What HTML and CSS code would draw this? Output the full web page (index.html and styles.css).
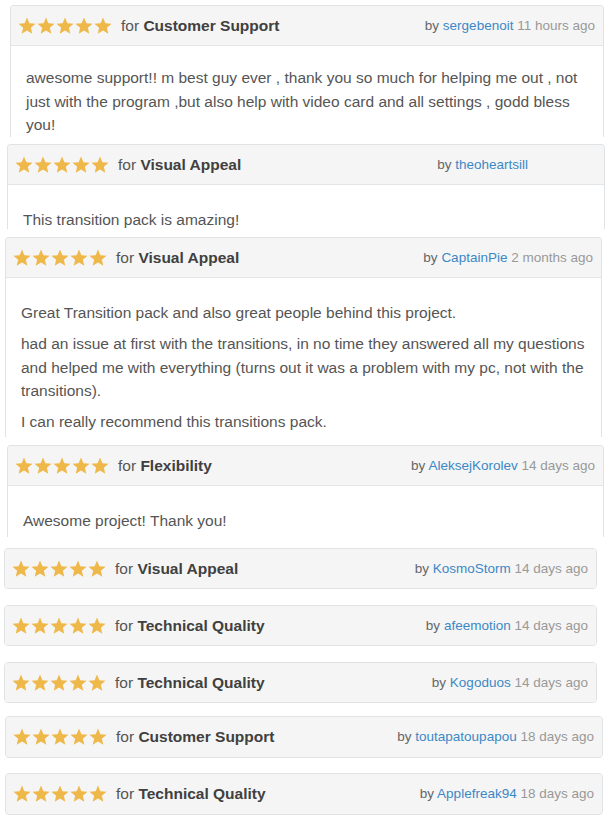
FILE: index.html
```html
<!DOCTYPE html>
<html lang="en">
<head>
<meta charset="utf-8">
<title>Reviews</title>
<link rel="stylesheet" href="styles.css">
</head>
<body>
<svg class="defs" width="0" height="0" aria-hidden="true">
  <defs>
    <symbol id="star" viewBox="0 0 20 20">
      <polygon points="10,0.5 12.65,6.86 19.51,7.41 14.28,11.89 15.88,18.59 10,15 4.12,18.59 5.72,11.89 0.49,7.41 7.35,6.86"/>
    </symbol>
    <symbol id="stars5" viewBox="0 0 94 18">
      <use href="#star" x="0" y="0" width="18" height="18"/>
      <use href="#star" x="19" y="0" width="18" height="18"/>
      <use href="#star" x="38" y="0" width="18" height="18"/>
      <use href="#star" x="57" y="0" width="18" height="18"/>
      <use href="#star" x="76" y="0" width="18" height="18"/>
    </symbol>
  </defs>
</svg>

<main class="reviews">
  <article class="review cut r1">
    <header class="review-head">
      <svg class="stars" aria-label="5 stars"><use href="#stars5"/></svg>
      <span class="cat">for <b>Customer Support</b></span>
      <span class="meta">by <a href="#">sergebenoit</a> <span class="date">11 hours ago</span></span>
    </header>
    <div class="review-body">
      <p>awesome support!! m best guy ever , thank you so much for helping me out , not just with the program ,but also help with video card and all settings , godd bless you!</p>
    </div>
  </article>

  <article class="review cut r2">
    <header class="review-head">
      <svg class="stars" aria-label="5 stars"><use href="#stars5"/></svg>
      <span class="cat">for <b>Visual Appeal</b></span>
      <span class="meta meta-hidden-date">by <a href="#">theoheartsill</a></span>
    </header>
    <div class="review-body">
      <p>This transition pack is amazing!</p>
    </div>
  </article>

  <article class="review cut r3">
    <header class="review-head">
      <svg class="stars" aria-label="5 stars"><use href="#stars5"/></svg>
      <span class="cat">for <b>Visual Appeal</b></span>
      <span class="meta">by <a href="#">CaptainPie</a> <span class="date">2 months ago</span></span>
    </header>
    <div class="review-body">
      <p>Great Transition pack and also great people behind this project.</p>
      <p>had an issue at first with the transitions, in no time they answered all my questions and helped me with everything (turns out it was a problem with my pc, not with the transitions).</p>
      <p>I can really recommend this transitions pack.</p>
    </div>
  </article>

  <article class="review cut r4">
    <header class="review-head">
      <svg class="stars" aria-label="5 stars"><use href="#stars5"/></svg>
      <span class="cat">for <b>Flexibility</b></span>
      <span class="meta">by <a href="#">AleksejKorolev</a> <span class="date">14 days ago</span></span>
    </header>
    <div class="review-body">
      <p>Awesome project! Thank you!</p>
    </div>
  </article>

  <article class="review closed r5">
    <header class="review-head">
      <svg class="stars" aria-label="5 stars"><use href="#stars5"/></svg>
      <span class="cat">for <b>Visual Appeal</b></span>
      <span class="meta">by <a href="#">KosmoStorm</a> <span class="date">14 days ago</span></span>
    </header>
  </article>

  <article class="review closed r6">
    <header class="review-head">
      <svg class="stars" aria-label="5 stars"><use href="#stars5"/></svg>
      <span class="cat">for <b>Technical Quality</b></span>
      <span class="meta">by <a href="#">afeemotion</a> <span class="date">14 days ago</span></span>
    </header>
  </article>

  <article class="review closed r7">
    <header class="review-head">
      <svg class="stars" aria-label="5 stars"><use href="#stars5"/></svg>
      <span class="cat">for <b>Technical Quality</b></span>
      <span class="meta">by <a href="#">Kogoduos</a> <span class="date">14 days ago</span></span>
    </header>
  </article>

  <article class="review closed r8">
    <header class="review-head">
      <svg class="stars" aria-label="5 stars"><use href="#stars5"/></svg>
      <span class="cat">for <b>Customer Support</b></span>
      <span class="meta">by <a href="#">toutapatoupapou</a> <span class="date">18 days ago</span></span>
    </header>
  </article>

  <article class="review closed r9">
    <header class="review-head">
      <svg class="stars" aria-label="5 stars"><use href="#stars5"/></svg>
      <span class="cat">for <b>Technical Quality</b></span>
      <span class="meta">by <a href="#">Applefreak94</a> <span class="date">18 days ago</span></span>
    </header>
  </article>
</main>
</body>
</html>
```
FILE: styles.css
```css
* { box-sizing: border-box; }

html, body {
  margin: 0;
  padding: 0;
  background: #ffffff;
}

body {
  font-family: "Liberation Sans", Arial, sans-serif;
  color: #555555;
}

.defs { position: absolute; width: 0; height: 0; overflow: hidden; }

.reviews {
  display: flex;
  flex-direction: column;
  align-items: flex-start;
}

.review {
  border: 1px solid #dfe3e6;
  border-radius: 4px;
  background: #ffffff;
  overflow: hidden;
}

.review.cut {
  border-bottom: none;
  border-radius: 4px 4px 0 0;
}

.review.closed {
  background: #f5f5f5;
}

.review-head {
  display: flex;
  align-items: center;
  height: 39px;
  padding: 0 8px 0 7px;
  background: #f5f5f5;
  font-size: 15.5px;
}

.review.cut .review-head {
  height: 40px;
  border-bottom: 1px solid #e3e6e8;
}

.stars {
  width: 94px;
  height: 18px;
  fill: #efb84b;
  flex: none;
  margin-top: 1px;
}

.cat {
  margin-left: 9px;
  color: #555555;
}

.cat b {
  color: #404040;
  font-weight: bold;
}

.meta {
  margin-left: auto;
  color: #666666;
  font-size: 13.5px;
}

.meta a {
  color: #3c88c6;
  text-decoration: none;
}

.meta .date {
  color: #999999;
}

.meta-hidden-date {
  padding-right: 68px;
}

.review-body {
  padding: 23px 16px 0 15px;
  font-size: 15.5px;
  line-height: 23.5px;
  color: #555555;
}

.review-body p {
  margin: 0 0 7.5px;
}

/* collage placement of each cropped panel */
.r1 { margin: 5px 0 0 10px; width: 594px; height: 132px; }
.r1 .review-body { padding-top: 20px; }
.r2 { margin: 7px 0 0 7px;  width: 598px; height: 85px; }
.r3 { margin: 8px 0 0 5px;  width: 597px; height: 200px; }
.r4 { margin: 8px 0 0 7px;  width: 597px; height: 92px; }
.r5 { margin: 11px 0 0 4px; width: 593px; height: 41px; }
.r6 { margin: 16px 0 0 4px; width: 593px; height: 41px; }
.r7 { margin: 16px 0 0 4px; width: 593px; height: 41px; }
.r8 { margin: 13px 0 0 5px; width: 598px; height: 42px; }
.r9 { margin: 15px 0 0 5px; width: 598px; height: 42px; }
```
